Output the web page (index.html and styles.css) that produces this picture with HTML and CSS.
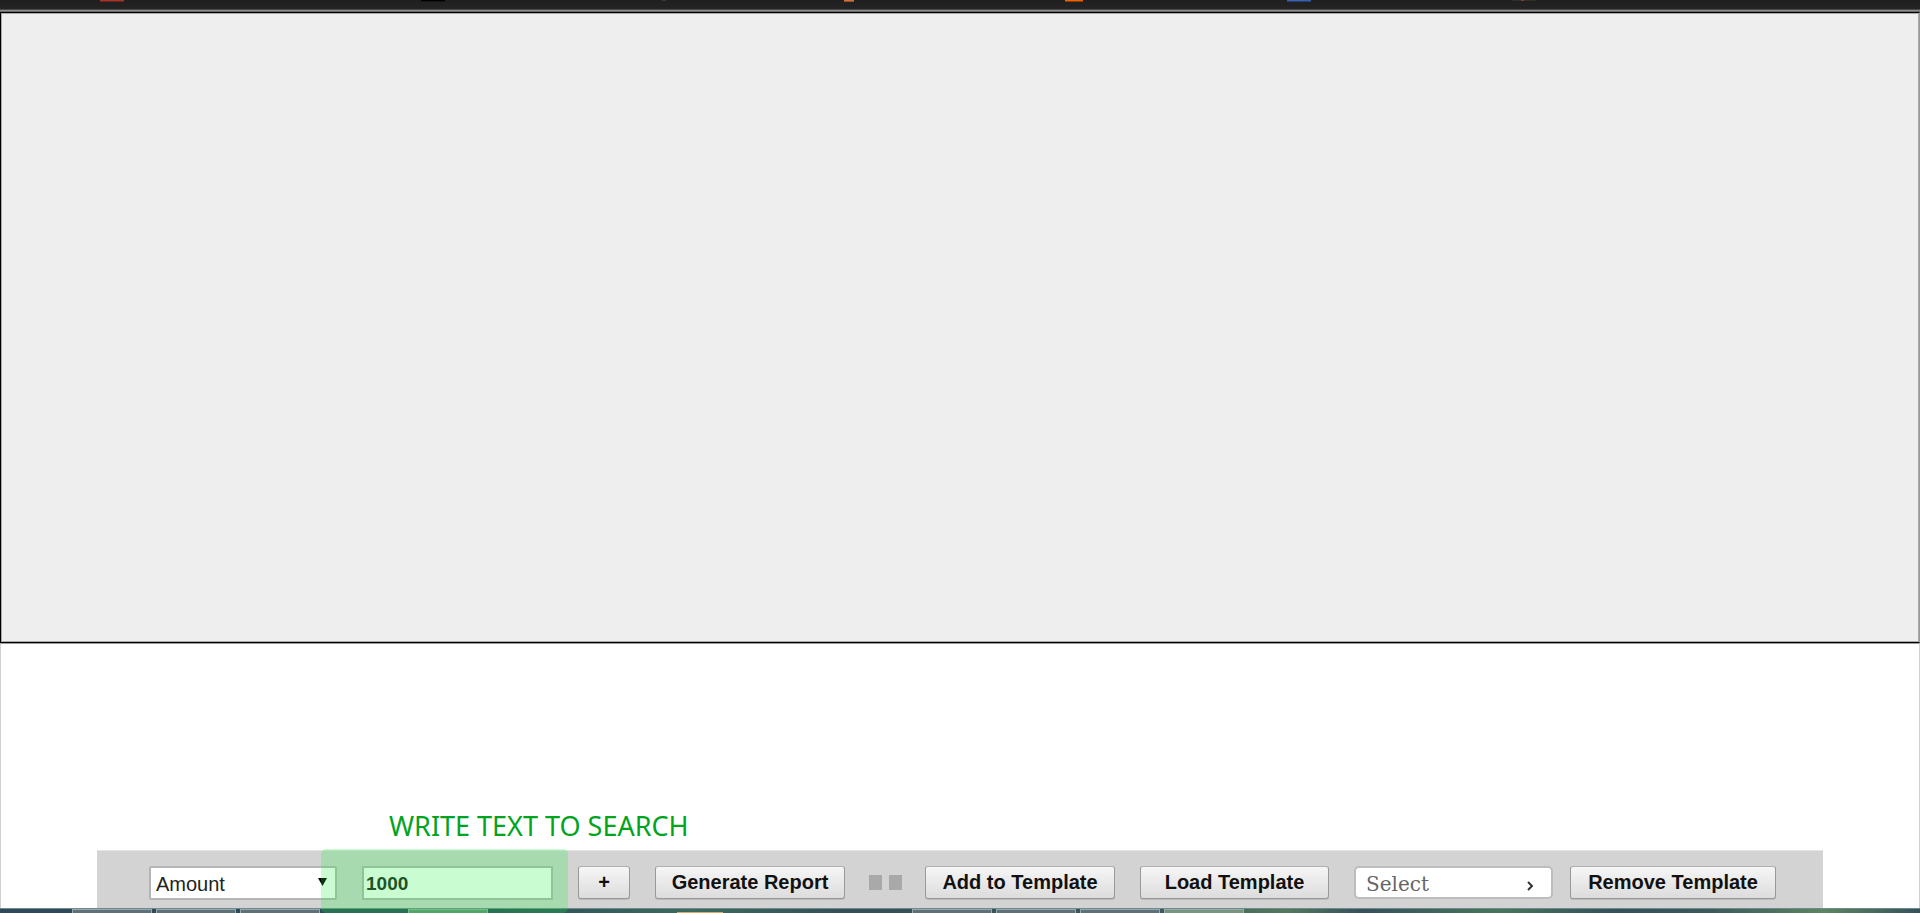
FILE: index.html
```html
<!DOCTYPE html>
<html lang="en">
<head>
<meta charset="utf-8">
<title>Report Search</title>
<link rel="stylesheet" href="styles.css">
</head>
<body>
<div class="page">
  <header class="bookmarks">
    <svg class="bookmark-icons" width="1440" height="3" viewBox="0 0 1440 3" aria-hidden="true">
      <path fill="#a93427" d="M0 0h24v1H0z"/><path fill="#66281f" d="M0 1h24v1H0z"/>
      <path fill="#000" d="M321 0h24v1h-24z"/><path fill="#141414" d="M321 1h24v1h-24z"/>
      <path fill="#3c3c3c" d="M562 0h4v1h-4z"/>
      <path fill="#cf7136" d="M744 0h10v1h-10z"/><path fill="#91532f" d="M744 1h10v1h-10z"/>
      <path fill="#f26100" d="M965 0h18v1h-18z"/><path fill="#84410f" d="M965 1h18v1h-18z"/>
      <path fill="#395fb5" d="M1187 0h24v1h-24z"/><path fill="#2c3f69" d="M1187 1h24v1h-24z"/>
      <path fill="#302f23" d="M1412 0h24v1h-24z"/><path fill="#a03322" d="M1421 0h3v1h-3z"/>
    </svg>
  </header>
  <main class="content">
    <section class="report" aria-label="Report"></section>
    <section class="search">
      <label class="hint" for="search-text">WRITE TEXT TO SEARCH</label>
      <form class="toolbar">
        <div class="field field-column">
          <select class="control column-select" aria-label="Column"><option>Amount</option></select>
          <svg class="arrow-down" width="9" height="8" viewBox="0 0 9 8" aria-hidden="true"><path d="M0 0h9L4.5 8z"/></svg>
        </div>
        <div class="field field-text">
          <input class="control text-input" id="search-text" type="text" value="1000">
          <span class="highlight"></span>
        </div>
        <button class="button button-add" type="button">+</button>
        <button class="button button-generate" type="button">Generate Report</button>
        <div class="markers"><span class="marker"></span><span class="marker"></span></div>
        <button class="button button-save" type="button">Add to Template</button>
        <button class="button button-load" type="button">Load Template</button>
        <div class="field field-template">
          <select class="template-select" aria-label="Template"><option>Select</option></select>
          <svg class="chevron" width="7" height="10" viewBox="0 0 7 10" aria-hidden="true"><path d="M1 1l4 4-4 4" fill="none" stroke="#333" stroke-width="2"/></svg>
        </div>
        <button class="button button-remove" type="button">Remove Template</button>
      </form>
    </section>
  </main>
  <footer class="taskbar">
    <div class="tasks"><span class="task"></span><span class="task"></span><span class="task"></span></div>
    <div class="tasks tasks-single"><span class="task task-green"></span></div>
    <span class="task-icon"></span>
    <div class="tasks"><span class="task"></span><span class="task"></span><span class="task"></span><span class="task task-light"></span></div>
  </footer>
</div>
</body>
</html>
```
FILE: styles.css
```css
* { box-sizing: border-box; }

body { margin: 0; background: #fff; font-family: "Liberation Sans", Arial, sans-serif; }

.page { display: flex; flex-direction: column; min-height: 100vh; }

.bookmarks {
  height: 12px;
  padding-left: 100px;
  background: linear-gradient(#1f1f1f 0, #242424 9px, #4a4a4a 9px, #4a4a4a 10px, #8c8888 10px, #8c8888 11px, #6a6868 11px);
  overflow: hidden;
}
.bookmark-icons { display: block; }

.content {
  flex: 1;
  display: flex;
  flex-direction: column;
}
.report {
  flex: 1;
  border: 1px solid #000;
  border-right-color: #999;
  background: #eee;
  box-shadow: inset 0 0 0 1px #aaa;
}

.search {
  padding: 164px 5% 0;
  border: solid #d0d0d0;
  border-width: 1px 1px 0;
  border-top-color: #999;
}
.hint {
  display: block;
  margin-left: 292px;
  height: 42px;
  line-height: 36px;
  font-family: "Noto Sans", sans-serif;
  font-size: 27px;
  color: #00a41e;
}

.toolbar {
  display: flex;
  align-items: flex-start;
  gap: 25px;
  height: 58px;
  padding: 15px 0 0 52px;
  border-top: 1px solid #e3e3e3;
  background: #d3d3d3;
}

.field { position: relative; }
.field-column { width: 188px; }
.field-text { width: 191px; }
.field-template { width: 199px; margin-right: -8px; }

.control {
  display: block;
  width: 100%;
  height: 34px;
  border: 2px solid #b5b5b5;
  border-radius: 0;
  background: #fff;
  color: #222;
  font-family: "Liberation Sans", Arial, sans-serif;
  font-size: 20px;
}
.column-select { appearance: none; border-radius: 2px; padding: 2px 5px 0; }
.text-input { padding: 1px 0 0 2px; font-weight: bold; font-size: 19px; }
.arrow-down { position: absolute; right: 10px; top: 12px; pointer-events: none; }

.highlight {
  position: absolute;
  inset: -17px -15px -13px -41px;
  border-radius: 5px;
  background: rgba(20, 245, 55, 0.23);
  pointer-events: none;
}

.button {
  height: 33px;
  padding: 0;
  border: 1px solid #999;
  border-top-color: #b0b0b0;
  border-radius: 3px;
  background: linear-gradient(#f6f6f6, #dcdcdc);
  box-shadow: 0 1px 0 #bbb;
  color: #111;
  font-family: "Liberation Sans", Arial, sans-serif;
  font-size: 20px;
  font-weight: bold;
  white-space: nowrap;
}
.button-add { width: 52px; }
.button-generate, .button-save { width: 190px; }
.button-load { width: 189px; }
.button-remove { width: 206px; }

.markers { display: flex; gap: 7px; margin: 0 -2px 0 -1px; padding-top: 9px; }
.marker { width: 13px; height: 15px; background: #a9a9a9; }

.template-select {
  appearance: none;
  display: block;
  width: 100%;
  height: 33px;
  padding: 3px 10px 0;
  border: 2px solid #bdbdbd;
  border-radius: 5px;
  background: #fff;
  color: #666;
  font-family: "DejaVu Serif", serif;
  font-size: 20px;
}
.chevron { position: absolute; right: 19px; top: 15px; pointer-events: none; }

.taskbar {
  display: flex;
  gap: 88px;
  height: 5px;
  padding-left: 72px;
  border-top: 1px solid #6f8a8c;
  background: linear-gradient(90deg, #2f4a5a 0, #2a4c5a 25%, #3b6b5c 36%, #345058 44%, #38585d 60%, #527a5c 67%, #35515c 71%, #47775a 78%, #34515c 84%, #3a5a5b 89%, #5b8660 95%, #35525c 100%);
  overflow: hidden;
}
.tasks { display: flex; gap: 4px; }
.task {
  width: 80px;
  height: 5px;
  border: 1px solid #98a8ab;
  background: #5e7179;
}
.task-green { background: #639174; }
.task-light { background: #77967d; }
.task-icon { width: 46px; height: 1px; margin: 3px 101px 0; background: #e0a66a; }
```
